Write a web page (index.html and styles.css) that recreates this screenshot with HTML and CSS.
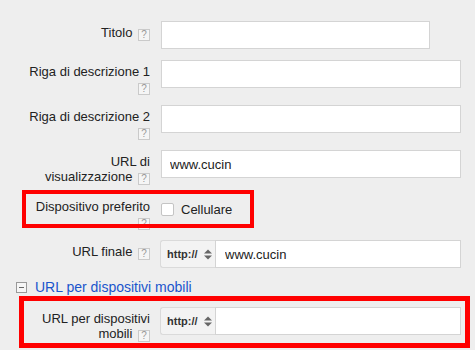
FILE: index.html
```
<!DOCTYPE html>
<html lang="it">
<head>
<meta charset="utf-8">
<link rel="stylesheet" href="styles.css">
</head>
<body>
<div class="form">
  <div class="row">
    <div class="label">Titolo <span class="help">?</span></div>
    <input class="field short" type="text">
  </div>
  <div class="row">
    <div class="label">Riga di descrizione 1 <span class="help">?</span></div>
    <input class="field" type="text">
  </div>
  <div class="row">
    <div class="label">Riga di descrizione 2 <span class="help">?</span></div>
    <input class="field" type="text">
  </div>
  <div class="row">
    <div class="label">URL di visualizzazione <span class="help">?</span></div>
    <input class="field" type="text" value="www.cucin">
  </div>
  <div class="row marked">
    <div class="label">Dispositivo preferito <span class="help">?</span></div>
    <label class="check"><span class="box"></span>Cellulare</label>
    <div class="annot annot-1"></div>
  </div>
  <div class="row">
    <div class="label">URL finale <span class="help">?</span></div>
    <div class="url">
      <div class="proto">http://
        <svg class="arrows" width="8" height="11" viewBox="0 0 8 11"><path d="M0 4.5 L4 0.5 L8 4.5 Z M0 6.5 L4 10.5 L8 6.5 Z" fill="#666"/></svg>
      </div>
      <input class="url-input" type="text" value="www.cucin">
    </div>
  </div>
  <div class="section">
    <span class="toggle"></span>URL per dispositivi mobili
  </div>
  <div class="row marked">
    <div class="label">URL per dispositivi mobili <span class="help">?</span></div>
    <div class="url">
      <div class="proto">http://
        <svg class="arrows" width="8" height="11" viewBox="0 0 8 11"><path d="M0 4.5 L4 0.5 L8 4.5 Z M0 6.5 L4 10.5 L8 6.5 Z" fill="#666"/></svg>
      </div>
      <input class="url-input" type="text">
    </div>
    <div class="annot annot-2"></div>
  </div>
</div>
</body>
</html>
```
FILE: styles.css
```
html, body {
  margin: 0;
  padding: 0;
  background: #eeeeee;
}
body {
  font-family: "Liberation Sans", Arial, Helvetica, sans-serif;
  font-size: 13px;
  color: #222;
}
.form {
  padding: 21px 0 0 25px;
}
.row {
  display: flex;
  align-items: flex-start;
  gap: 11px;
  margin-bottom: 11px;
}
.marked {
  position: relative;
}
.label {
  width: 125px;
  flex: none;
  text-align: right;
  padding-top: 4px;
  line-height: 15px;
}
.help {
  display: inline-block;
  box-sizing: border-box;
  width: 12px;
  height: 12px;
  margin: -3px 0 -3px 2px;
  border: 1px solid #cacaca;
  background: #f5f5f5;
  color: #999;
  font-size: 10px;
  line-height: 10px;
  text-align: center;
  vertical-align: -1px;
}
.field {
  box-sizing: border-box;
  width: 300px;
  height: 28px;
  margin: 0;
  border: 1px solid #d4d4d4;
  background: #fff;
  padding: 0 8px;
  font-family: inherit;
  font-size: 13px;
  color: #222;
  outline: none;
}
.field.short {
  width: 269px;
}
.check {
  display: flex;
  align-items: center;
  gap: 7px;
  margin-top: 7px;
}
.box {
  box-sizing: border-box;
  width: 13px;
  height: 13px;
  background: #fff;
  border: 1px solid #c4c4c4;
  border-radius: 2px;
}
.url {
  display: flex;
  margin-left: -1px;
}
.proto {
  box-sizing: border-box;
  width: 55px;
  height: 28px;
  display: flex;
  align-items: center;
  gap: 6px;
  padding-left: 6px;
  background: #f3f3f3;
  border: 1px solid #dadada;
  border-right: none;
  border-radius: 3px 0 0 3px;
  font-size: 11px;
  font-weight: bold;
  color: #333;
}
.url-input {
  box-sizing: border-box;
  width: 246px;
  height: 28px;
  margin: 0;
  border: 1px solid #d4d4d4;
  background: #fff;
  padding: 0 9px;
  font-family: inherit;
  font-size: 13px;
  color: #222;
  outline: none;
}
.section {
  display: flex;
  align-items: center;
  gap: 8px;
  margin-left: -9px;
  margin-bottom: 12px;
  font-size: 14px;
  line-height: 16px;
  color: #1a55cc;
}
.toggle {
  box-sizing: border-box;
  position: relative;
  width: 11px;
  height: 11px;
  border: 1px solid #999;
  background: #f6f6f6;
}
.toggle::after {
  content: "";
  position: absolute;
  left: 2px;
  right: 2px;
  top: 4px;
  height: 1px;
  background: #666;
}
.annot {
  position: absolute;
  box-sizing: border-box;
  border: 4px solid #ff0000;
  pointer-events: none;
}
.annot-1 {
  left: -3px;
  top: -5px;
  width: 232px;
  height: 38px;
}
.annot-2 {
  left: -6px;
  top: -11px;
  width: 451px;
  height: 52px;
  border-width: 5px;
}
```
